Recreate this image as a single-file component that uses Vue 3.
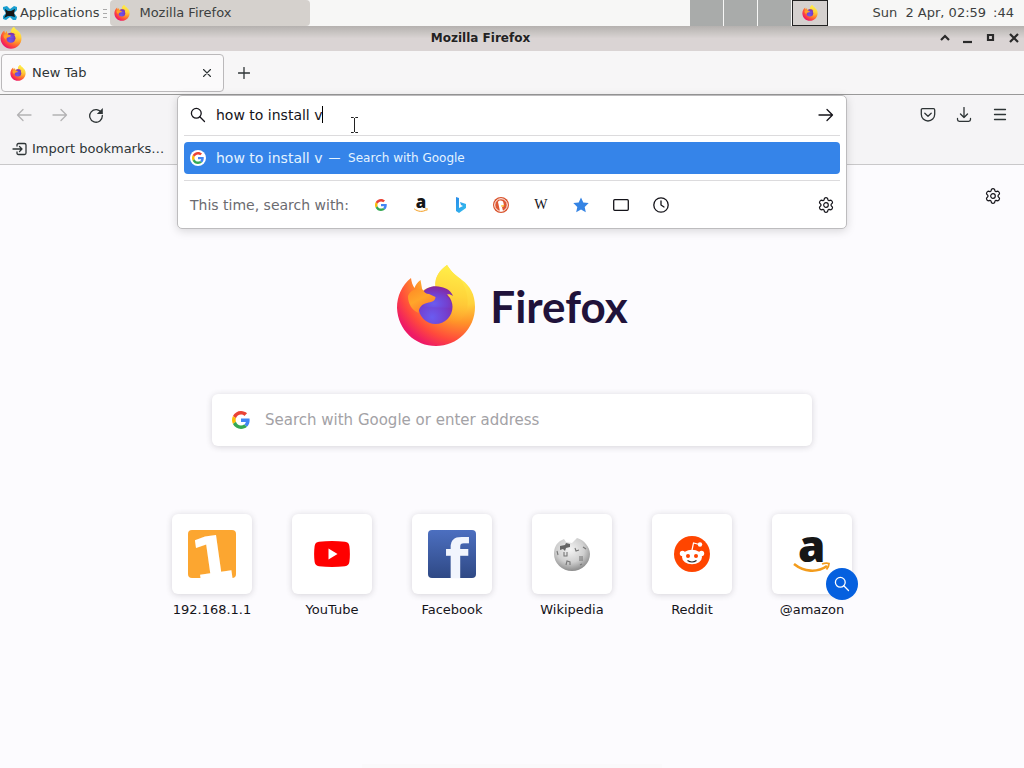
<template>
  <svg class="sprite" aria-hidden="true">
    <defs>
      <radialGradient id="fx-body" cx="0.86" cy="0.08" r="1.02">
        <stop offset="0" stop-color="#fff44f" />
        <stop offset="0.4" stop-color="#ffd23c" />
        <stop offset="0.62" stop-color="#ff9329" />
        <stop offset="0.84" stop-color="#ff4a3c" />
        <stop offset="1" stop-color="#ee1a66" />
      </radialGradient>
      <linearGradient id="fx-flame" x1="0.5" y1="0" x2="0.4" y2="1">
        <stop offset="0" stop-color="#fff04a" />
        <stop offset="0.5" stop-color="#ffd43a" />
        <stop offset="1" stop-color="#ff9a28" stop-opacity="0" />
      </linearGradient>
      <radialGradient id="fx-globe" cx="0.4" cy="0.8" r="0.85">
        <stop offset="0" stop-color="#6a5cf0" />
        <stop offset="0.5" stop-color="#7340d0" />
        <stop offset="1" stop-color="#8a2394" />
      </radialGradient>
      <linearGradient id="fx-head" x1="0" y1="0" x2="0.6" y2="1">
        <stop offset="0" stop-color="#ff8a25" />
        <stop offset="0.5" stop-color="#ffa62a" />
        <stop offset="1" stop-color="#ff7a2e" />
      </linearGradient>
      <linearGradient id="fb-bg" x1="0" y1="0" x2="0" y2="1">
        <stop offset="0" stop-color="#4c6fc0" />
        <stop offset="1" stop-color="#2f4985" />
      </linearGradient>
      <radialGradient id="wiki-bg" cx="0.45" cy="0.35" r="0.65">
        <stop offset="0" stop-color="#f4f4f4" />
        <stop offset="0.6" stop-color="#cfcfcf" />
        <stop offset="1" stop-color="#8c8c8c" />
      </radialGradient>
      <linearGradient id="bing-bg" x1="0" y1="0" x2="1" y2="1">
        <stop offset="0" stop-color="#2a8bea" />
        <stop offset="1" stop-color="#35c3ee" />
      </linearGradient>
    </defs>
    <symbol id="firefox" viewBox="0 0 80 82">
      <path fill="url(#fx-body)" d="M15 13C6 20 1 31 1 43c1 22 18 38 39 38s39-17 39-39c0-13-5-21-13-27C61 11 56 8 51 0 44 5 39 11 39.500 22c-5-1-9 1-13 4l-2-11c-3 2-5 5-6 8-2-3-3-6-3.500-10z" />
      <path fill="url(#fx-flame)" d="M51 0C44 5 38 12 39.500 22c10 0 16 6 17 16 1 12-6 20-13 21 17 4 30-6 28-26-1-8-4-14-7-19C59 11 56 7 51 0z" />
      <circle cx="39.500" cy="42" r="17" fill="url(#fx-globe)" />
      <path fill="url(#fx-globe)" d="M25 30c4-8 13-10 20-8 6 1 10 4 12 9-3-2-5-2-7-1 4 4 6 8 6 13L28 42z" />
      <path fill="url(#fx-head)" d="M12 31c2-5 7-8 14-7 2 3 4 5 7 5l6.500 3c0 4-4 5-8.500 6-5 1-8 4-8.500 10C16 45 12 39 12 31z" />
    </symbol>
    <symbol id="google" viewBox="0 0 48 48">
      <path fill="#EA4335" d="M24 9.500c3.540 0 6.710 1.220 9.210 3.600l6.850-6.850C35.900 2.380 30.470 0 24 0 14.620 0 6.510 5.380 2.560 13.220l7.980 6.190C12.430 13.720 17.740 9.500 24 9.500z" />
      <path fill="#4285F4" d="M46.980 24.550c0-1.570-.15-3.090-.38-4.550H24v9.020h12.940c-.58 2.960-2.260 5.480-4.780 7.180l7.730 6c4.510-4.180 7.090-10.360 7.090-17.650z" />
      <path fill="#FBBC05" d="M10.530 28.590c-.48-1.450-.76-2.990-.76-4.590s.27-3.140.76-4.590l-7.980-6.190C.92 16.460 0 20.120 0 24c0 3.880.92 7.540 2.560 10.780l7.970-6.190z" />
      <path fill="#34A853" d="M24 48c6.480 0 11.930-2.130 15.890-5.810l-7.730-6c-2.150 1.450-4.920 2.300-8.160 2.300-6.260 0-11.570-4.220-13.470-9.910l-7.980 6.190C6.510 42.620 14.620 48 24 48z" />
    </symbol>
    <symbol id="smile" viewBox="0 0 40 42">
      <path d="M2 31c10 8 23 9 33 2" fill="none" stroke="#f39c1c" stroke-width="2.600" />
      <path d="M30 31c3-1 5-1 7-.5 0 2-1 4-2.500 6" fill="none" stroke="#f39c1c" stroke-width="1.800" />
    </symbol>
    <symbol id="lens" viewBox="0 0 16 16">
      <circle cx="6.300" cy="6.300" r="4.900" fill="none" stroke="currentColor" stroke-width="1.300" />
      <path d="M9.800 9.800l4.700 4.700" fill="none" stroke="currentColor" stroke-width="1.300" stroke-linecap="round" />
    </symbol>
    <symbol id="gear" viewBox="0 0 16 16">
      <path d="M6.500 1.200Q8 .2 9.500 1.200L10 3.100l1 .6 2-.5q1.600.8 1.500 2.600L13.100 7.300v1.400l1.400 1.500q.1 1.800-1.500 2.600l-2-.5-1 .6-.5 1.900q-1.500 1-3 0L6 12.900l-1-.6-2 .5q-1.600-.8-1.500-2.600L2.900 8.700V7.300L1.500 5.800Q1.400 4 3 3.200l2 .5 1-.6z" fill="none" stroke="currentColor" stroke-width="1.200" stroke-linejoin="round" />
      <circle cx="8" cy="8" r="2.300" fill="none" stroke="currentColor" stroke-width="1.200" />
    </symbol>
  </svg>

  <div class="desktop">
    <header class="panel">
      <button class="apps">
        <svg width="16" height="16" viewBox="0 0 16 16" aria-hidden="true">
          <path d="M1 2l4-1 3 3 4-3 3 1v3l-3 3 3 4-1 3-3 0-3-3-4 3-3-1v-3l3-3-3-4z" fill="#1a9fd0" />
          <path d="M3 4l3 2h3l4-2-1 4 1 4-4-1-3 0-4 2 2-4z" fill="#161616" />
        </svg>
        Applications
      </button>
      <span class="grip"><i></i><i></i><i></i></span>
      <button class="task">
        <svg width="16" height="16"><use href="#firefox" /></svg>
        Mozilla Firefox
      </button>
      <div class="pager">
        <button v-for="n in 3" :key="n" class="workspace" :aria-label="'Workspace ' + n"></button>
        <button class="workspace active" aria-label="Workspace 4">
          <svg width="16" height="16"><use href="#firefox" /></svg>
        </button>
      </div>
      <time class="clock">Sun&nbsp; 2 Apr, 02:59</time>
      <span class="seconds">:44</span>
    </header>

    <div class="titlebar">
      <svg width="22" height="22"><use href="#firefox" /></svg>
      <h1>Mozilla Firefox</h1>
      <div class="win-buttons">
        <button aria-label="Shade"><svg width="12" height="12"><path d="M2 8l4-4 4 4" class="thick" /></svg></button>
        <button aria-label="Minimize"><svg width="12" height="12"><path d="M1 10h9" class="thick" /></svg></button>
        <button aria-label="Maximize"><svg width="12" height="12"><path d="M3 3h5v5h-5z" class="thick" /></svg></button>
        <button aria-label="Close"><svg width="12" height="12"><path d="M2 2l8 8M10 2l-8 8" class="thick" /></svg></button>
      </div>
    </div>

    <div class="tabs">
      <div class="tab">
        <svg width="16" height="16"><use href="#firefox" /></svg>
        <span class="tab-title">New Tab</span>
        <button aria-label="Close tab"><svg width="8" height="8"><path d="M.5.500l7 7M7.500.500l-7 7" class="line thin" /></svg></button>
      </div>
      <button class="new-tab" aria-label="Open a new tab"><svg width="12" height="12"><path d="M6 .5v11M.5 6h11" class="line" /></svg></button>
    </div>

    <div class="toolbars">
      <nav class="nav">
        <button class="tool off" aria-label="Back"><svg width="16" height="16"><path d="M15 8H1.500M7 2.500L1.500 8l5.500 5.500" class="line" /></svg></button>
        <button class="tool off" aria-label="Forward"><svg width="16" height="16"><path d="M1 8h13.500M9 2.500l5.500 5.500L9 13.500" class="line" /></svg></button>
        <button class="tool" aria-label="Reload"><svg width="16" height="16"><path d="M13.600 6A6.300 6.300 0 1 0 14.300 8.500" class="line" /><path d="M14.800 1v6h-6z" fill="currentColor" /></svg></button>
        <div class="urlbar">
          <div class="popup">
            <div class="url-row">
              <svg class="lens" width="16" height="16"><use href="#lens" /></svg>
              <input v-model="query" class="url-input" aria-label="Search with Google or enter address" />
              <span class="caret"></span>
              <button class="go" aria-label="Go"><svg width="16" height="16"><path d="M1 8h13.500M9 2.500l5.500 5.500L9 13.500" class="line" /></svg></button>
            </div>
            <button class="result">
              <span class="result-icon"><svg width="12" height="12"><use href="#google" /></svg></span>
              {{ query }}
              <span class="result-action">—&nbsp; Search with Google</span>
            </button>
            <div class="engines">
              <span class="engines-label">This time, search with:</span>
              <button aria-label="Google"><svg width="12" height="12"><use href="#google" /></svg></button>
              <button aria-label="Amazon">
                <svg class="spill" width="16" height="16" viewBox="0 0 40 42"><text x="6" y="29" class="amazon-a">a</text><use href="#smile" /></svg>
              </button>
              <button aria-label="Bing">
                <svg width="16" height="16"><path d="M3 0l3 1v10l4-2-2-1-1-3 6 2v4l-7 5-3-2z" fill="url(#bing-bg)" /></svg>
              </button>
              <button aria-label="DuckDuckGo">
                <svg width="16" height="16">
                  <circle cx="8" cy="8" r="8" fill="#d9532c" />
                  <circle cx="8" cy="8" r="6.300" fill="#de5833" stroke="#fff" stroke-width="1" />
                  <path d="M5 5c1-2 5-2 5.500 1l.5 3-2 1 1 4-3 .3z" fill="#fff" />
                  <path d="M8 8.500l3.500-.5-1 1.500H8z" fill="#fdb913" />
                </svg>
              </button>
              <button aria-label="Wikipedia" class="wiki-w">W</button>
              <button aria-label="Bookmarks">
                <svg width="16" height="16"><path d="M8 .5l2.300 5 5.400.6-4 3.800 1.100 5.400L8 12.600l-4.800 2.700 1.100-5.400-4-3.800 5.400-.6z" fill="#3584e4" /></svg>
              </button>
              <button aria-label="Tabs"><svg width="16" height="16"><rect x="0.700" y="2.700" width="14.600" height="10.600" rx="1" class="line" /></svg></button>
              <button aria-label="History"><svg width="16" height="16"><circle cx="8" cy="8" r="7.200" class="line" /><path d="M8 4v4l3 2" class="line" /></svg></button>
              <button class="engine-settings" aria-label="Search settings"><svg width="16" height="16"><use href="#gear" /></svg></button>
            </div>
          </div>
          <svg class="pointer" width="9" height="18" viewBox="0 0 9 18" aria-hidden="true">
            <path d="M1 1.500h2.500l1 1 1-1H8M4.500 2v14M1 16.500h2.500l1-1 1 1H8" fill="none" stroke="#fff" stroke-width="3" />
            <path d="M1 1.500h2.500l1 1 1-1H8M4.500 2v14M1 16.500h2.500l1-1 1 1H8" fill="none" stroke="#222" />
          </svg>
        </div>
        <button class="tool" aria-label="Save to Pocket"><svg width="16" height="16"><path d="M2.500 1.700h11q1.200 0 1.200 1.200v4.400a6.700 6.700 0 0 1-13.400 0V2.900q0-1.200 1.200-1.200zM4.800 6.200L8 9.200l3.200-3" class="line" /></svg></button>
        <button class="tool" aria-label="Downloads"><svg width="16" height="16"><path d="M8 .5v10M4.500 7l3.500 3.500L11.500 7M1.500 11.500v1q0 1.800 1.800 1.800h9.400q1.800 0 1.800-1.800v-1" class="line" /></svg></button>
        <button class="tool" aria-label="Menu"><svg width="16" height="16"><path d="M2.500 2.500h11M2.500 7.500h11M2.500 12.500h11" class="line" /></svg></button>
      </nav>
      <div class="bookmarks">
        <button>
          <svg width="16" height="16"><path d="M5 5V4q0-1.500 1.500-1.500h6q1.500 0 1.500 1.500v8q0 1.500-1.500 1.500h-6Q5 13.500 5 12v-1M1 8h9M7.500 5.500L10 8l-2.500 2.500" class="line" /></svg>
          Import bookmarks…
        </button>
      </div>
    </div>

    <main class="newtab">
      <button class="customize" aria-label="Personalize new tab"><svg width="16" height="16"><use href="#gear" /></svg></button>
      <div class="brand">
        <svg width="80" height="82"><use href="#firefox" /></svg>
        <span class="wordmark">Firefox</span>
      </div>
      <label class="searchbox">
        <svg width="18" height="18"><use href="#google" /></svg>
        <input type="text" placeholder="Search with Google or enter address" aria-label="Search" />
      </label>
      <div class="tiles">
        <a v-for="site in sites" :key="site.name" class="site" href="#">
          <span class="tile">
            <svg v-if="site.icon === 'one'" class="spill" width="48" height="48">
              <rect width="48" height="48" rx="4" fill="#fca630" />
              <text x="2" y="51" class="one" transform="rotate(-8 24 24)">1</text>
            </svg>
            <svg v-else-if="site.icon === 'youtube'" width="36" height="26">
              <path d="M5 .8Q18-.6 31 .8q4 .4 4.400 4.400 1 7.800 0 15.600-.4 4-4.400 4.400-13 1.400-26 0-4-.4-4.400-4.400-1-7.800 0-15.600Q1 1.200 5 .8z" fill="#f00" />
              <path d="M14.500 7.500v11l9-5.500z" fill="#fff" />
            </svg>
            <svg v-else-if="site.icon === 'facebook'" class="spill" width="48" height="48">
              <rect width="48" height="48" rx="4" fill="url(#fb-bg)" />
              <text x="17" y="48" class="facebook-f">f</text>
            </svg>
            <svg v-else-if="site.icon === 'wikipedia'" width="36" height="36">
              <path d="M6 5l4-2 2 3 6 1 5-5c7 2 13 9 13 16a18 17 0 0 1-36 0C0 12 2 8 6 5z" fill="url(#wiki-bg)" />
              <path d="M6 10l5-1 1-2 4 1v3l-4 1-1 3-2-2-3 1z" fill="#666" />
              <path d="M10 16v4h3v-4M21 12l1 3 3-1M26 20v5M28 20v5M12 29l1-4 3 1v3M3 15l1 4M29 11l3 2M26 29l2-1" fill="none" stroke="#777" stroke-width="1.100" />
            </svg>
            <svg v-else-if="site.icon === 'reddit'" width="36" height="36">
              <circle cx="18" cy="18" r="18" fill="#ff4500" />
              <circle cx="8.500" cy="17.500" r="2.700" fill="#fff" />
              <circle cx="27.500" cy="17.500" r="2.700" fill="#fff" />
              <ellipse cx="18" cy="21" rx="10" ry="7.300" fill="#fff" />
              <path d="M18 14l1.500-7 6 1.500" fill="none" stroke="#fff" stroke-width="1.200" />
              <circle cx="26" cy="8.500" r="2.200" fill="#fff" />
              <circle cx="14" cy="20" r="2" fill="#ff4500" />
              <circle cx="22" cy="20" r="2" fill="#ff4500" />
              <path d="M13.500 24.500q4.500 3 9 0" fill="none" stroke="#222" stroke-width="1.200" />
            </svg>
            <svg v-else class="spill" width="40" height="42"><text x="6" y="29" class="amazon-a">a</text><use href="#smile" /></svg>
            <span v-if="site.search" class="badge"><svg width="16" height="16"><use href="#lens" /></svg></span>
          </span>
          {{ site.name }}
        </a>
      </div>
      <div class="sheet"></div>
    </main>
  </div>
</template>

<script setup>
import { ref } from 'vue'

const query = ref('how to install v')
const sites = [
  { name: '192.168.1.1', icon: 'one' },
  { name: 'YouTube', icon: 'youtube' },
  { name: 'Facebook', icon: 'facebook' },
  { name: 'Wikipedia', icon: 'wikipedia' },
  { name: 'Reddit', icon: 'reddit' },
  { name: '@amazon', icon: 'amazon', search: true }
]
</script>

<style>
body {
  background: #fcfbfe;
}
</style>

<style scoped>
.sprite {
  position: absolute;
  width: 0;
  height: 0;
}
.desktop {
  min-height: 100vh;
  display: flex;
  flex-direction: column;
  font: 13px/16px "DejaVu Sans", sans-serif;
  color: #2e3436;
}
.desktop * {
  box-sizing: border-box;
}
button {
  display: flex;
  align-items: center;
  justify-content: center;
  border: 0;
  padding: 0;
  background: none;
  font: inherit;
  color: inherit;
}
svg {
  flex: none;
  display: block;
}
.spill {
  overflow: visible;
}
.line {
  fill: none;
  stroke: currentColor;
  stroke-width: 1.3;
  stroke-linecap: round;
  stroke-linejoin: round;
}
.thin {
  stroke-width: 1.1;
}
.thick {
  fill: none;
  stroke: #2a2a2a;
  stroke-width: 2.2;
}
.amazon-a {
  font: 800 44px "Open Sans", sans-serif;
  fill: #161616;
}
.one {
  font: bold 62px "DejaVu Sans", sans-serif;
  fill: #fff;
}
.facebook-f {
  font: bold 54px "DejaVu Sans", sans-serif;
  fill: #f1f5fd;
}

/* desktop panel */
.panel {
  display: flex;
  align-items: center;
  height: 26px;
  background: #f7f7f6;
  color: #3c3f40;
}
.apps {
  gap: 2px;
  padding-left: 2px;
}
.grip {
  display: flex;
  flex-direction: column;
  gap: 3px;
  margin: 0 3px 0 4px;
}
.grip i {
  width: 4px;
  height: 1px;
  background: #aaa;
}
.task {
  justify-content: flex-start;
  gap: 9px;
  width: 200px;
  height: 26px;
  padding-left: 4px;
  border-radius: 4px;
  background: #d5d1cd;
}
.pager {
  display: flex;
  gap: 1px;
  height: 26px;
  margin-left: auto;
}
.workspace {
  width: 33px;
  background: #a9abaa;
}
.workspace.active {
  width: 36px;
  height: 26px;
  border: 1px solid #222;
  background: #d5d1cf;
}
.clock {
  margin-left: 44px;
}
.seconds {
  margin: 0 10px 0 7px;
}

/* window frame */
.titlebar {
  display: flex;
  align-items: center;
  height: 25px;
  padding-bottom: 2px;
  background: linear-gradient(#b5b1af, #cbc7c5 30%, #dad4d4 50%, #dad4d4);
}
.titlebar h1 {
  flex: 1;
  margin: 0;
  font-size: 12px;
  line-height: 24px;
  text-align: center;
  color: #222;
}
.win-buttons {
  display: flex;
  gap: 11px;
  padding-right: 4px;
}

/* tab strip */
.tabs {
  display: flex;
  align-items: center;
  height: 44px;
  padding-left: 1px;
  border-bottom: 1px solid #999;
  background: #f7f6f7;
}
.tab {
  display: flex;
  align-items: center;
  gap: 6px;
  width: 223px;
  height: 38px;
  padding: 0 12px 0 8px;
  border: 1px solid #bbb9bb;
  border-radius: 4px;
  background: #fbfafb;
}
.tab-title {
  flex: 1;
}
.new-tab {
  width: 40px;
  height: 40px;
}

/* toolbars */
.toolbars {
  height: 70px;
  border-bottom: 1px solid #c9c8ca;
  background: #f5f4f6;
}
.nav {
  display: flex;
  align-items: center;
  height: 40px;
  padding: 0 6px;
}
.tool {
  width: 36px;
  height: 36px;
}
.off {
  color: #b3b2b4;
}
.urlbar {
  position: relative;
  flex: 1;
  align-self: stretch;
  margin: 0 63px;
}
.popup {
  position: absolute;
  z-index: 2;
  top: 0;
  left: 0;
  right: 0;
  padding: 0 6px;
  border: 1px solid #bdbcbe;
  border-radius: 5px;
  background: #fff;
  box-shadow: 0 2px 10px rgba(0, 0, 0, 0.15);
  font-size: 14px;
  color: #15141a;
}
.url-row {
  display: flex;
  align-items: center;
  height: 40px;
  padding: 0 6px 2px;
  border-bottom: 1px solid #dcdbdd;
}
.lens {
  margin-right: 10px;
}
.url-input {
  field-sizing: content;
  border: 0;
  padding: 0;
  outline: none;
  background: none;
  font: inherit;
  color: inherit;
}
.caret {
  width: 1px;
  height: 17px;
  background: #000;
}
.go {
  margin-left: auto;
}
.result {
  justify-content: flex-start;
  width: 100%;
  height: 32px;
  margin: 6px 0;
  padding-left: 6px;
  border-radius: 4px;
  background: #3584e9;
  color: #e4f3ff;
}
.result-icon {
  display: flex;
  align-items: center;
  justify-content: center;
  width: 16px;
  height: 16px;
  margin-right: 10px;
  border-radius: 50%;
  background: #fff;
}
.result-action {
  margin-left: 6px;
  font-size: 12px;
}
.engines {
  display: flex;
  align-items: center;
  height: 48px;
  padding: 0 6px;
  border-top: 1px solid #dcdbdd;
}
.engines-label {
  margin-right: 12px;
  color: #6b6b70;
}
.engines button {
  width: 40px;
  height: 32px;
}
.engines .wiki-w {
  font: 14px "Liberation Serif", serif;
}
.engines .engine-settings {
  width: 16px;
  margin-left: auto;
}
.pointer {
  position: absolute;
  z-index: 3;
  top: 21px;
  left: 173px;
}
.bookmarks {
  display: flex;
  height: 28px;
  padding-left: 12px;
}
.bookmarks button {
  gap: 4px;
}

/* new tab page */
.newtab {
  flex: 1;
  display: flex;
  flex-direction: column;
  align-items: center;
  background: #fcfbfe;
  color: #15141a;
}
.customize {
  align-self: flex-end;
  width: 32px;
  height: 32px;
  margin: 15px 15px 0 0;
}
.brand {
  display: flex;
  align-items: center;
  gap: 14px;
  margin-top: 53px;
}
.wordmark {
  font: bold 44px/48px Lato, sans-serif;
  color: #20123a;
}
.searchbox {
  display: flex;
  align-items: center;
  gap: 15px;
  width: 600px;
  max-width: 90%;
  height: 52px;
  margin-top: 47px;
  padding: 0 20px;
  border-radius: 6px;
  background: #fff;
  box-shadow: 0 1px 6px rgba(58, 57, 68, 0.2);
}
.searchbox input {
  flex: 1;
  border: 0;
  padding: 0;
  outline: none;
  background: none;
  font: 15px/20px "DejaVu Sans", sans-serif;
}
.searchbox input::placeholder {
  color: #a3a2a6;
}
.tiles {
  display: flex;
  flex-wrap: wrap;
  justify-content: center;
  margin-top: 68px;
}
.site {
  display: flex;
  flex-direction: column;
  align-items: center;
  gap: 8px;
  width: 120px;
  color: inherit;
  text-decoration: none;
}
.tile {
  position: relative;
  display: flex;
  align-items: center;
  justify-content: center;
  width: 80px;
  height: 80px;
  border-radius: 6px;
  background: #fff;
  box-shadow: 0 1px 6px rgba(58, 57, 68, 0.2);
}
.badge {
  position: absolute;
  right: -6px;
  bottom: -6px;
  display: flex;
  align-items: center;
  justify-content: center;
  width: 32px;
  height: 32px;
  border-radius: 50%;
  background: #0560df;
  color: #fff;
}
.sheet {
  width: 300px;
  height: 4px;
  margin-top: auto;
  background: #faf9fb;
}
</style>
